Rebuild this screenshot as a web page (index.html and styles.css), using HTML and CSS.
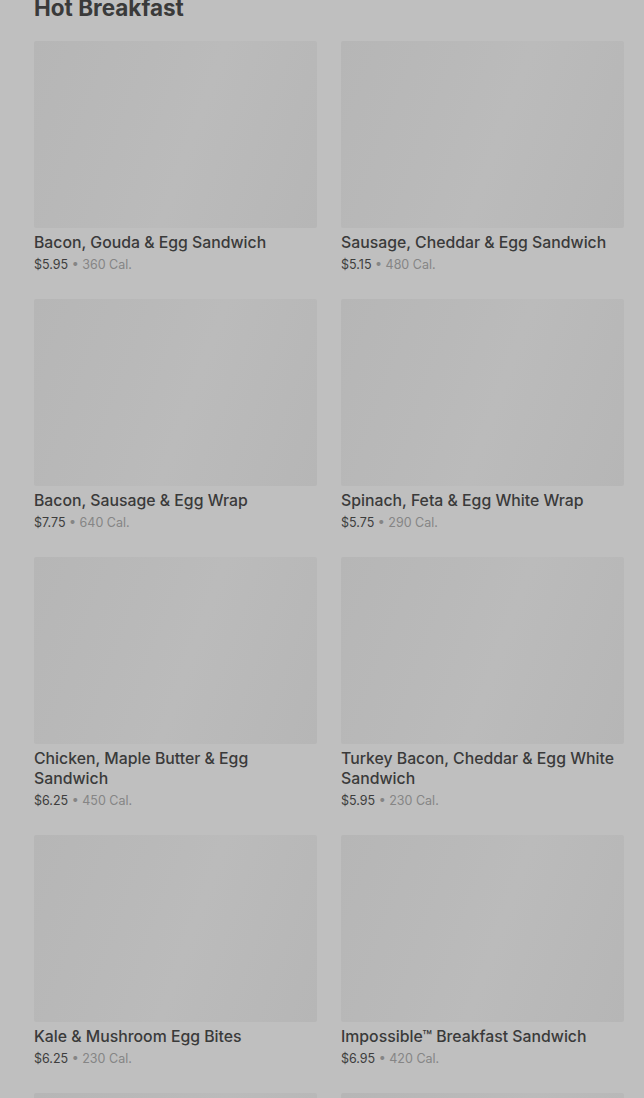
FILE: index.html
```html
<!DOCTYPE html>
<html>
<head>
  <title>Hot Breakfast</title>
  <link rel="stylesheet" href="styles.css">
</head>
<body>
  <div class="menu">
    <h2 class="section-title">Hot Breakfast</h2>
    <div class="grid">
      <div class="item">
        <div class="thumb"></div>
        <div class="name">Bacon, Gouda &amp; Egg Sandwich</div>
        <div class="meta">$5.95 <span class="cal">• 360 Cal.</span></div>
      </div>
      <div class="item">
        <div class="thumb"></div>
        <div class="name">Sausage, Cheddar &amp; Egg Sandwich</div>
        <div class="meta">$5.15 <span class="cal">• 480 Cal.</span></div>
      </div>
      <div class="item">
        <div class="thumb"></div>
        <div class="name">Bacon, Sausage &amp; Egg Wrap</div>
        <div class="meta">$7.75 <span class="cal">• 640 Cal.</span></div>
      </div>
      <div class="item">
        <div class="thumb"></div>
        <div class="name">Spinach, Feta &amp; Egg White Wrap</div>
        <div class="meta">$5.75 <span class="cal">• 290 Cal.</span></div>
      </div>
      <div class="item">
        <div class="thumb"></div>
        <div class="name">Chicken, Maple Butter &amp; Egg Sandwich</div>
        <div class="meta">$6.25 <span class="cal">• 450 Cal.</span></div>
      </div>
      <div class="item">
        <div class="thumb"></div>
        <div class="name">Turkey Bacon, Cheddar &amp; Egg White Sandwich</div>
        <div class="meta">$5.95 <span class="cal">• 230 Cal.</span></div>
      </div>
      <div class="item">
        <div class="thumb"></div>
        <div class="name">Kale &amp; Mushroom Egg Bites</div>
        <div class="meta">$6.25 <span class="cal">• 230 Cal.</span></div>
      </div>
      <div class="item">
        <div class="thumb"></div>
        <div class="name">Impossible™ Breakfast Sandwich</div>
        <div class="meta">$6.95 <span class="cal">• 420 Cal.</span></div>
      </div>
      <div class="item">
        <div class="thumb"></div>
      </div>
      <div class="item">
        <div class="thumb"></div>
      </div>
    </div>
  </div>
</body>
</html>
```

FILE: styles.css
```css
body {
  margin: 0;
  background: #bfbfbf;
  font-family: Inter, "Noto Sans", sans-serif;
  color: #3b3b3b;
  overflow: hidden;
}
.menu {
  padding: 0 20px 0 34px;
}
.section-title {
  font-size: 22.5px;
  font-weight: 700;
  line-height: 28px;
  margin: -6px 0 19px;
  color: #3a3a3a;
}
.grid {
  display: grid;
  grid-template-columns: 283px 283px;
  column-gap: 24px;
  row-gap: 25px;
}
.thumb {
  height: 187px;
  border-radius: 2px;
  background: linear-gradient(110deg, #b6b6b6 0%, #b9b9b9 35%, #bbbbbb 55%, #b6b6b6 100%);
  margin-bottom: 5px;
}
.name {
  font-size: 15.8px;
  font-weight: 500;
  line-height: 20px;
  color: #3a3a3a;
}
.meta {
  font-size: 12.5px;
  line-height: 18px;
  margin-top: 3px;
  color: #3d3d3d;
}
.cal {
  color: #858585;
}
```
